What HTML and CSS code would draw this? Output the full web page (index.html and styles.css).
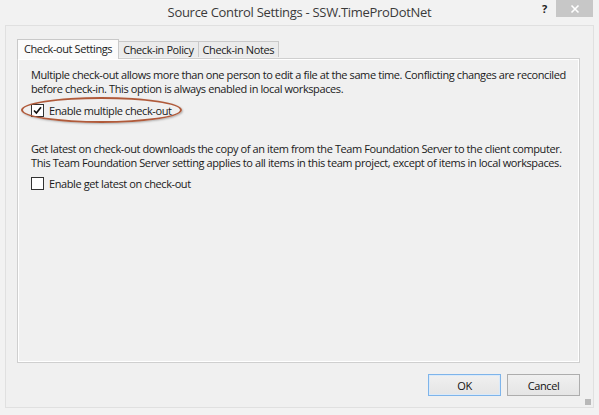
FILE: index.html
```html
<!DOCTYPE html>
<html>
<head>
<meta charset="utf-8">
<link rel="stylesheet" href="styles.css">
</head>
<body>
<div class="window">
  <div class="titlebar">
    <div class="title">Source Control Settings - SSW.TimeProDotNet</div>
    <div class="help">?</div>
    <div class="close">
      <svg width="10" height="10" viewBox="0 0 10 10"><path d="M1.5 1.5 L8.5 8.5 M8.5 1.5 L1.5 8.5" stroke="#fff" stroke-width="1.6"/></svg>
    </div>
  </div>
  <div class="client">
    <div class="tabs">
      <div class="tab active">Check-out Settings</div>
      <div class="tab">Check-in Policy</div>
      <div class="tab">Check-in Notes</div>
    </div>
    <div class="panel">
      <p class="desc">Multiple check-out allows more than one person to edit a file at the same time. Conflicting changes are reconciled before check-in. This option is always enabled in local workspaces.</p>
      <label class="check first">
        <span class="box checked">
          <svg width="9" height="9" viewBox="0 0 9 9"><path d="M1 4.5 L3.4 7 L8 1.2" fill="none" stroke="#111" stroke-width="1.7"/></svg>
        </span>
        <span>Enable multiple check-out</span>
        <span class="highlight"></span>
      </label>
      <p class="desc second">Get latest on check-out downloads the copy of an item from the Team Foundation Server to the client computer. This Team Foundation Server setting applies to all items in this team project, except of items in local workspaces.</p>
      <label class="check">
        <span class="box"></span>
        <span>Enable get latest on check-out</span>
      </label>
    </div>
    <div class="buttons">
      <div class="btn default">OK</div>
      <div class="btn">Cancel</div>
    </div>
    <div class="grip"></div>
  </div>
</div>
</body>
</html>
```

FILE: styles.css
```css
html, body {
  margin: 0;
  padding: 0;
}
body {
  width: 599px;
  height: 415px;
  overflow: hidden;
  font-family: "Open Sans", "Noto Sans", sans-serif;
  font-size: 11px;
  letter-spacing: -0.4px;
  color: #1a1a1a;
  background: #f2f2f2;
}
.window {
  width: 599px;
  height: 415px;
  box-sizing: border-box;
  padding: 0 5px 7px 5px;
  display: flex;
  flex-direction: column;
  background: #f2f2f2;
}
.titlebar {
  height: 25px;
  position: relative;
  display: flex;
  justify-content: center;
  align-items: center;
}
.title {
  font-size: 13px;
  letter-spacing: -0.3px;
  color: #3a3a3a;
  margin-top: -1px;
}
.help {
  position: absolute;
  left: 537px;
  top: 1px;
  font-weight: bold;
  font-size: 11px;
  color: #222;
}
.close {
  position: absolute;
  left: 551px;
  top: 0;
  width: 37px;
  height: 17px;
  background: #c7c7c7;
  display: flex;
  align-items: center;
  justify-content: center;
}
.client {
  flex: 1;
  border: 1px solid #e0e0e0;
  background: #f0f0f0;
  padding: 13px 13px 0 11px;
  display: flex;
  flex-direction: column;
  position: relative;
}
.tabs {
  display: flex;
  align-items: flex-end;
  height: 19px;
  position: relative;
  z-index: 1;
}
.tab {
  height: 16px;
  line-height: 15px;
  box-sizing: border-box;
  padding: 0 4px;
  border: 1px solid #c9c9c9;
  border-bottom: none;
  background: #ebebeb;
  margin-bottom: 1px;
  margin-left: -1px;
}
.tab.active {
  height: 20px;
  line-height: 17px;
  background: #fbfbfb;
  margin-bottom: -1px;
  margin-left: 0;
  padding: 0 6px;
  border-color: #c9c9c9;
}
.panel {
  height: 305px;
  box-sizing: border-box;
  border: 1px solid #cfcfcf;
  box-shadow: inset 1px 1px 0 #fff, inset -1px -1px 0 #fff;
  background: #f0f0f0;
  padding: 9px 12px 0 13px;
  position: relative;
}
.desc {
  margin: 0;
  line-height: 13.5px;
}
.second {
  margin-top: 24px;
}
.check {
  display: flex;
  align-items: center;
  gap: 5px;
  height: 15px;
  margin-top: 7px;
  position: relative;
}
.check.first {
  margin-top: 8px;
  margin-left: 0;
}
.box {
  width: 11px;
  height: 11px;
  border: 1px solid #333;
  background: #fff;
  display: flex;
  align-items: center;
  justify-content: center;
}
.highlight {
  position: absolute;
  left: -10px;
  top: -6px;
  width: 157px;
  height: 22px;
  border: 2px solid #b05a3a;
  border-radius: 50%;
  box-shadow: 1px 1px 2px rgba(0,0,0,0.25);
}
.buttons {
  display: flex;
  justify-content: flex-end;
  gap: 6px;
  margin-top: 11px;
}
.btn {
  width: 73px;
  height: 22px;
  box-sizing: border-box;
  border: 1px solid #adadad;
  background: linear-gradient(#f0f0f0, #e5e5e5);
  display: flex;
  align-items: center;
  justify-content: center;
  color: #111;
}
.btn.default {
  border: 1px solid #7eb4ea;
  box-shadow: inset 0 0 0 1px #dbeaf9;
}
.grip {
  position: absolute;
  right: 2px;
  bottom: 2px;
  width: 6px;
  height: 6px;
  background-image: radial-gradient(circle, #b8b8b8 0.8px, transparent 1px);
  background-size: 2px 2px;
}
```
